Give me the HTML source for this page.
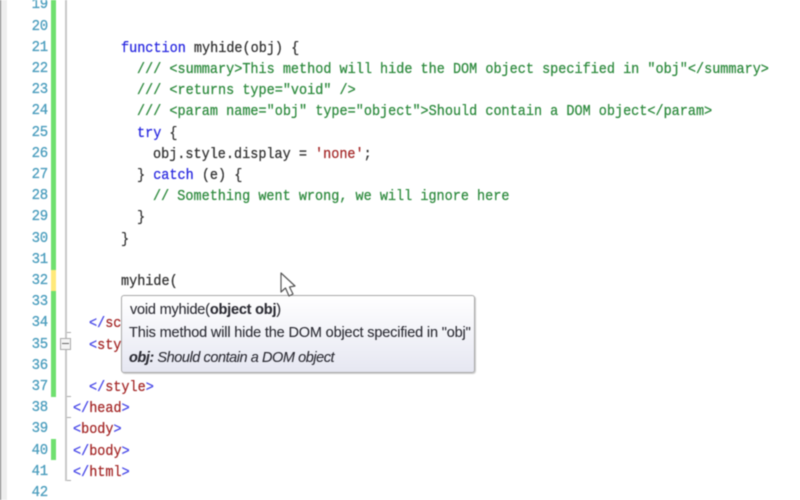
<!DOCTYPE html>
<html><head><meta charset="utf-8"><style>
html,body{margin:0;padding:0;width:800px;height:500px;overflow:hidden;background:#fff}
#w{position:relative;width:800px;height:500px;filter:blur(.45px);overflow:hidden}
.a{position:absolute}
.l,.n{position:absolute;font:13.5px/21px "Liberation Mono",monospace;white-space:pre;height:21px;-webkit-text-stroke:.25px;transform:scaleY(1.08);transform-origin:0 50%}
.n{left:28px;width:20px;text-align:right;color:#4a9dbd;font-size:14px;letter-spacing:-.2px}
.k{color:#2a2ae0}.t{color:#333}.b{color:#4a4ae8}.r{color:#a52a2a}
.g{color:#2f8b3f}
.tt{position:absolute;left:129px;font:14.5px/18px "Liberation Sans",sans-serif;color:#2c2c34;white-space:pre;-webkit-text-stroke:.1px}
</style></head><body><div id="w">
<div class="a" style="left:0;top:0;width:7px;height:500px;background:#eeeeee"></div>
<div class="a" style="left:0;top:0;width:1px;height:500px;background:#777"></div>
<div class="a" style="left:51px;top:0;width:5px;height:270px;background:#6fe06f"></div>
<div class="a" style="left:51px;top:270px;width:5px;height:21px;background:#ffe97a"></div>
<div class="a" style="left:51px;top:291px;width:5px;height:106px;background:#6fe06f"></div>
<div class="a" style="left:51px;top:439px;width:5px;height:21px;background:#6fe06f"></div>
<div class="a" style="left:65px;top:0;width:2px;height:481px;background:#c8c8c8"></div>
<div class="a" style="left:67px;top:480px;width:4px;height:1px;background:#aaa"></div>
<div class="a" style="left:67px;top:396px;width:4px;height:1px;background:#aaa"></div>
<div class="a" style="left:67px;top:417px;width:4px;height:1px;background:#aaa"></div>
<div class="a" style="left:67px;top:332px;width:4px;height:1px;background:#aaa"></div>
<div class="a" style="left:60px;top:338px;width:9px;height:10px;background:#f4f4f4;border:1px solid #aaa"></div>
<div class="a" style="left:62px;top:343px;width:7px;height:1px;background:#666"></div>

<div class="n" style="top:-5px">19</div>
<div class="n" style="top:17px">20</div>
<div class="n" style="top:38px">21</div>
<div class="n" style="top:59px">22</div>
<div class="n" style="top:80px">23</div>
<div class="n" style="top:101px">24</div>
<div class="n" style="top:123px">25</div>
<div class="n" style="top:144px">26</div>
<div class="n" style="top:165px">27</div>
<div class="n" style="top:186px">28</div>
<div class="n" style="top:207px">29</div>
<div class="n" style="top:229px">30</div>
<div class="n" style="top:250px">31</div>
<div class="n" style="top:271px">32</div>
<div class="n" style="top:292px">33</div>
<div class="n" style="top:313px">34</div>
<div class="n" style="top:335px">35</div>
<div class="n" style="top:356px">36</div>
<div class="n" style="top:377px">37</div>
<div class="n" style="top:398px">38</div>
<div class="n" style="top:419px">39</div>
<div class="n" style="top:441px">40</div>
<div class="n" style="top:462px">41</div>
<div class="n" style="top:483px">42</div>

<div class="l" style="left:121px;top:39px"><span class="k">function</span><span class="t"> myhide(obj) {</span></div>
<div class="l g" style="left:137px;top:60px">/// &lt;summary&gt;This method will hide the DOM object specified in "obj"&lt;/summary&gt;</div>
<div class="l g" style="left:137px;top:81px">/// &lt;returns type="void" /&gt;</div>
<div class="l g" style="left:137px;top:102px">/// &lt;param name="obj" type="object"&gt;Should contain a DOM object&lt;/param&gt;</div>
<div class="l" style="left:137px;top:124px"><span class="k">try</span><span class="t"> {</span></div>
<div class="l t" style="left:153px;top:145px">obj.style.display = <span class="r">'none'</span>;</div>
<div class="l" style="left:137px;top:166px"><span class="t">} </span><span class="k">catch</span><span class="t"> (e) {</span></div>
<div class="l g" style="left:153px;top:187px">// Something went wrong, we will ignore here</div>
<div class="l t" style="left:137px;top:208px">}</div>
<div class="l t" style="left:121px;top:230px">}</div>
<div class="l t" style="left:121px;top:272px">myhide(</div>
<div class="l" style="left:89px;top:314px"><span class="b">&lt;/</span><span class="r">sc</span></div>
<div class="l" style="left:89px;top:336px"><span class="b">&lt;</span><span class="r">sty</span></div>
<div class="l" style="left:89px;top:378px"><span class="b">&lt;/</span><span class="r">style</span><span class="b">&gt;</span></div>
<div class="l" style="left:73px;top:399px"><span class="b">&lt;/</span><span class="r">head</span><span class="b">&gt;</span></div>
<div class="l" style="left:73px;top:420px"><span class="b">&lt;</span><span class="r">body</span><span class="b">&gt;</span></div>
<div class="l" style="left:73px;top:442px"><span class="b">&lt;/</span><span class="r">body</span><span class="b">&gt;</span></div>
<div class="l" style="left:73px;top:463px"><span class="b">&lt;/</span><span class="r">html</span><span class="b">&gt;</span></div>

<div class="a" style="left:121px;top:295px;width:352px;height:76px;border:1px solid #a8a8a8;border-radius:3px;background:linear-gradient(#ffffff,#e6e7f2);box-shadow:1px 1px 1px #ccc"></div>
<div class="tt" style="left:130px;top:301px;letter-spacing:-.2px">void myhide(<b>object obj</b>)</div>
<div class="tt" style="top:324px;letter-spacing:-.16px">This method will hide the DOM object specified in "obj"</div>
<div class="tt" style="top:349px;letter-spacing:-.44px"><b><i>obj:</i></b> <i>Should contain a DOM object</i></div>

<svg class="a" style="left:275px;top:268px" width="26" height="34" viewBox="0 0 26 34">
<path d="M6 5 L6 24 L10.500 20 L14 28 L18 26 L14.500 19 L20 18 Z" fill="#fff" stroke="#555" stroke-width="1.200" stroke-linejoin="round"/>
</svg>
</div></body></html>
